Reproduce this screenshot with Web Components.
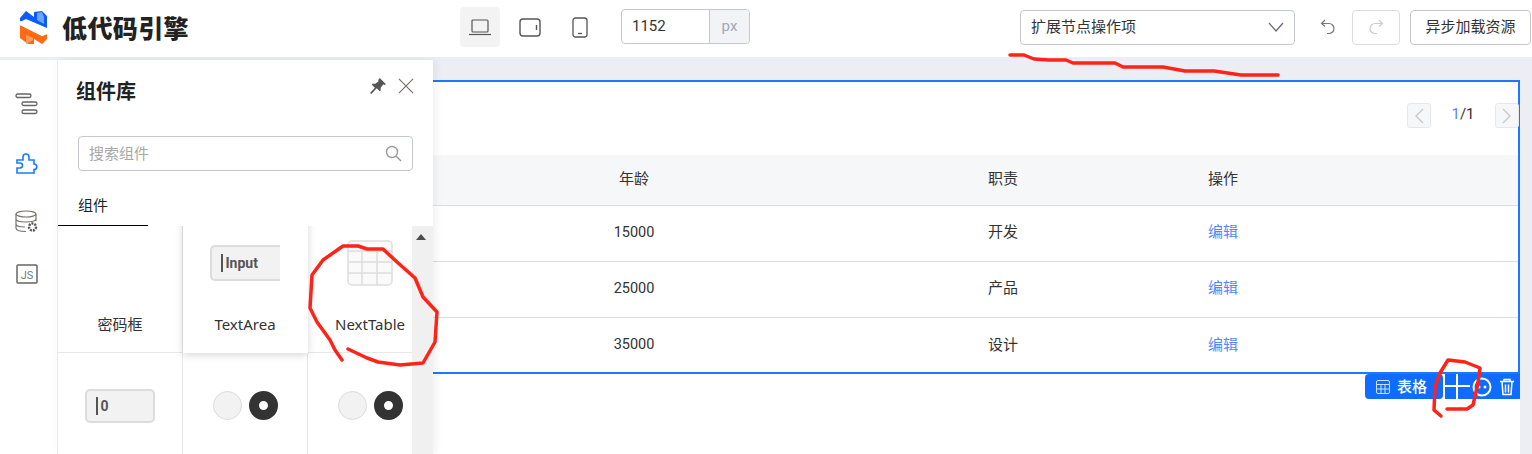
<!DOCTYPE html>
<html lang="zh-CN">
<head>
<meta charset="UTF-8">
<title>低代码引擎</title>
<style>
  html, body { margin: 0; height: 454px; overflow: hidden; background: #edeef3; }
  body { font: 15px Roboto, "Noto Sans CJK SC", sans-serif; color: #333; }
</style>
</head>
<body>
<engine-app></engine-app>

<template id="t-engine-app">
  <style>
    :host { display: flex; flex-direction: column; height: 454px; position: relative; }
    .work { flex: 1; display: flex; min-height: 0; }
  </style>
  <top-bar></top-bar>
  <div class="work">
    <side-rail></side-rail>
    <component-panel></component-panel>
    <design-canvas></design-canvas>
  </div>
  <ink-notes></ink-notes>
</template>

<template id="t-top-bar">
  <style>
    :host { display: flex; align-items: center; height: 57px; box-sizing: border-box; padding-bottom: 3px; background: #fff; flex: none; position: relative; z-index: 3; }
    .logo { display: flex; align-items: center; width: 460px; padding-left: 20px; box-sizing: border-box; flex: none; }
    .logo svg { width: 27px; height: 33px; flex: none; }
    .logo b { margin-left: 15px; font: 900 25px/1 "Noto Sans CJK SC", sans-serif; letter-spacing: .4px; color: #222; white-space: nowrap; }
    .devices { display: flex; width: 161px; flex: none; }
    .dev { width: 40px; height: 40px; margin-right: 10px; border-radius: 4px; display: flex; align-items: center; justify-content: center; }
    .dev.on { background: #f3f3f3; }
    .width { display: flex; width: 129px; height: 35px; margin-top: -2px; box-sizing: border-box; border: 1px solid #c4c6d0; border-radius: 4px; flex: none; overflow: hidden; }
    .width span { flex: 1; padding-left: 10px; line-height: 33px; font-size: 15px; }
    .width i { width: 39px; border-left: 1px solid #c4c6d0; background: #f2f3f7; color: #a3a6b4; font: 15px/33px Roboto, sans-serif; text-align: center; }
    .select { margin-left: 270px; width: 275px; height: 35px; box-sizing: border-box; border: 1px solid #c4c6d0; border-radius: 4px; display: flex; align-items: center; justify-content: space-between; padding: 0 10px; flex: none; }
    .select span, .async { line-height: 20px; padding-bottom: 1px; }
    .undo { width: 57px; box-sizing: border-box; padding-left: 9px; display: flex; justify-content: center; flex: none; }
    .btn { height: 35px; box-sizing: border-box; border: 1px solid #c4c6d0; border-radius: 4px; display: flex; align-items: center; justify-content: center; flex: none; }
    .redo { width: 48px; border-color: #dcdde3; margin-right: 10px; }
    .async { width: 121px; }
  </style>
  <div class="logo">
    <svg viewBox="0 0 27 33">
      <path fill="#0b5cff" d="M0 7 6 0l8 6V1l8-1 5 5v16L0 10z"/>
      <path fill="#6ea4ff" d="M17 2l5-1 2 5v7l-7-4z"/>
      <path fill="#ff6a13" d="M0 14l22 11 5-2v5l-5 5-8-5v5H8l-8-6z"/>
      <path fill="#ff9a5c" d="M6 33V24l7 3v2z"/>
      <path fill="#fff" d="M0 11l6-3 21 9v6l-5 2L0 14z"/>
    </svg>
    <b>低代码引擎</b>
  </div>
  <div class="devices">
    <div class="dev on"><svg width="22" height="17" viewBox="0 0 22 17" fill="none" stroke="#555" stroke-width="1.2"><rect x="3" y="1" width="16" height="12" rx="1"/><path d="M0 15.5h22"/></svg></div>
    <div class="dev"><svg width="22" height="19" viewBox="0 0 22 19" fill="none" stroke="#555" stroke-width="1.4"><rect x="1" y="1" width="20" height="17" rx="3"/><path d="M17.5 7v5"/></svg></div>
    <div class="dev"><svg width="16" height="21" viewBox="0 0 16 21" fill="none" stroke="#555" stroke-width="1.3"><rect x="1" y="1" width="14" height="19" rx="2.5"/><path d="M6 16.5h4"/></svg></div>
  </div>
  <div class="width"><span>1152</span><i>px</i></div>
  <div class="select">
    <span>扩展节点操作项</span>
    <svg width="16" height="10" viewBox="0 0 16 10" fill="none" stroke="#666" stroke-width="1.2"><path d="M1 1l7 8 7-8"/></svg>
  </div>
  <div class="undo"><svg width="16" height="16" viewBox="0 0 16 16" fill="none" stroke="#777" stroke-width="1.2"><path d="M5 1 1.500 4.500 5 7.500M2 4.500h7a5 5 0 0 1 0 10H7"/></svg></div>
  <div class="btn redo"><svg width="16" height="16" viewBox="0 0 16 16" fill="none" stroke="#ccc" stroke-width="1.2"><path d="M11 1l3.500 3.500L11 7.500M14 4.500H7a5 5 0 0 0 0 10h2"/></svg></div>
  <div class="btn async">异步加载资源</div>
</template>

<template id="t-side-rail">
  <style>
    :host { display: flex; flex-direction: column; align-items: center; width: 58px; margin-top: 3px; background: #fff; box-sizing: border-box; flex: none; position: relative; z-index: 2; border-right: 1px solid #eee; }
    svg { display: block; margin-left: -3px; }
    .a { margin-top: 33px; } .b { margin-top: 38px; } .c { margin-top: 36px; } .d { margin-top: 30px; }
  </style>
  <svg class="a" width="24" height="22" viewBox="0 0 24 22" fill="none" stroke="#666" stroke-width="1.3"><rect x="1" y="1" width="15" height="3.500" rx="1.700"/><rect x="7" y="9" width="15" height="3.500" rx="1.700"/><rect x="7" y="17" width="15" height="3.500" rx="1.700"/></svg>
  <svg class="b" width="23" height="21" viewBox="0 0 23 21" fill="none" stroke="#197aff" stroke-width="1.600"><path d="M1 7h6V4a3 3 0 0 1 6 0v3h5v4a2.800 2.800 0 0 1 0 5.600V20H1v-5h3a2.500 2.500 0 0 0 0-5H1z"/></svg>
  <svg class="c" width="24" height="24" viewBox="0 0 24 24" fill="none" stroke="#77706a" stroke-width="1.200"><ellipse cx="11" cy="4" rx="10" ry="3"/><path d="M1 4v14c0 2 4 3.500 10 3.500M21 4v7M1 9c0 2 5 3 10 3s10-1 10-3M1 14c0 2 4 3 9 3"/><circle cx="17.500" cy="17" r="3.500" stroke="#555" stroke-dasharray="2 1" stroke-width="2.400"/></svg>
  <svg class="d" width="22" height="20" viewBox="0 0 22 20"><rect x="1" y="1" width="20" height="18" rx="1" fill="none" stroke="#666" stroke-width="1.500"/><text x="11" y="14.500" text-anchor="middle" font-family="Roboto, sans-serif" font-size="11" fill="#777">JS</text></svg>
</template>

<template id="t-component-panel">
  <style>
    :host { display: flex; flex-direction: column; width: 375px; margin-top: 3px; background: #fff; flex: none; position: relative; z-index: 2; box-shadow: 2px 0 8px rgba(0,0,0,.07); }
    .head { display: flex; align-items: center; height: 63px; padding: 0 19px 0 18px; flex: none; }
    .head b { flex: 1; font-size: 20px; line-height: 24px; font-weight: 700; color: #222; }
    .head svg { display: block; margin-top: -12px; }
    .search { margin: 13px 20px 0; height: 35px; box-sizing: border-box; border: 1px solid #c4c6d0; border-radius: 4px; display: flex; align-items: center; justify-content: space-between; padding: 0 10px; color: #a8a8a8; flex: none; }
    .search span { line-height: 20px; }
    .tabs { height: 55px; box-sizing: border-box; flex: none; position: relative; }
    .tab { display: block; width: 90px; height: 55px; box-sizing: border-box; border-bottom: 1px solid #000; padding: 25px 0 0 20px; line-height: 20px; color: #222; }
    .list { flex: 1; min-height: 0; overflow: hidden; position: relative; }
    .grid { display: grid; grid-template-columns: repeat(3, 125px); margin-top: -16px; }
    .bar { position: absolute; top: 0; right: 0; bottom: 0; width: 21px; background: #f0f0f0; z-index: 2; }
    .bar::before { content: ""; position: absolute; left: 4px; top: 8px; border: 5px solid transparent; border-top: 0; border-bottom: 6px solid #4d4d4d; }
  </style>
  <div class="head">
    <b>组件库</b>
    <svg width="16" height="16" viewBox="0 0 18 18" style="margin-right:12px"><path fill="#555" d="M11 0l7 7-2 1-1-1-3 4 0 3-1 1-3.500-3.500L1.500 18 0 17l5.500-6L2 7.500l1-1h3l4-3-1-1z"/></svg>
    <svg width="16" height="16" viewBox="0 0 17 17" fill="none" stroke="#7b6f62" stroke-width="1.200"><path d="M1 1l15 15M16 1 1 16"/></svg>
  </div>
  <div class="search">
    <span>搜索组件</span>
    <svg width="17" height="17" viewBox="0 0 17 17" fill="none" stroke="#999" stroke-width="1.400"><circle cx="7" cy="7" r="5.500"/><path d="M11 11l5 5"/></svg>
  </div>
  <div class="tabs"><span class="tab">组件</span></div>
  <div class="list">
    <div class="grid">
      <comp-cell>密码框</comp-cell>
      <comp-cell raised><comp-pic slot="pic" kind="input" clip></comp-pic>TextArea</comp-cell>
      <comp-cell>
        <svg slot="pic" width="46" height="46" viewBox="0 0 46 46" fill="none" stroke="#ddd" stroke-width="1.500"><rect x="1" y="1" width="44" height="44" rx="4" fill="#fafafa"/><path d="M1 11h44M1 22h44M1 33h44M15 11v34M30 11v34"/></svg>
        NextTable
      </comp-cell>
      <comp-cell><comp-pic slot="pic" kind="number"></comp-pic></comp-cell>
      <comp-cell><comp-pic slot="pic" kind="radio"></comp-pic></comp-cell>
      <comp-cell><comp-pic slot="pic" kind="radio"></comp-pic></comp-cell>
    </div>
    <div class="bar"></div>
  </div>
</template>

<template id="t-comp-cell">
  <style>
    :host { display: flex; flex-direction: column; align-items: center; height: 143px; box-sizing: border-box; border-right: 1px solid #e8e8e8; border-bottom: 1px solid #e8e8e8; background: #fff; position: relative; }
    :host([raised]) { box-shadow: 0 2px 8px rgba(0,0,0,.16); z-index: 1; border-color: transparent; }
    .pic { height: 105px; display: flex; align-items: center; justify-content: center; flex: none; }
    .label { font: 15px/18px "Noto Sans", "Noto Sans CJK SC", sans-serif; color: #333; }
  </style>
  <div class="pic"><slot name="pic"></slot></div>
  <div class="label"><slot></slot></div>
</template>

<template id="t-comp-pic">
  <style>
    :host { display: block; }
    .field { width: 70px; height: 34px; box-sizing: border-box; background: #f2f2f2; border: 2px solid #dcdcdc; border-radius: 5px; display: flex; align-items: center; padding-left: 9px; padding-top: 1px; font: 700 14px/1 Roboto, sans-serif; color: #555; }
    :host([clip]) .field { border-right: 0; border-radius: 5px 0 0 5px; height: 36px; }
    .field::before { content: ""; width: 1.500px; height: 18px; background: #555; margin-right: 3px; }
    .radios { display: flex; gap: 7px; }
    .off, .on { width: 29px; height: 29px; box-sizing: border-box; border-radius: 50%; }
    .off { background: #f2f2f2; border: 1.500px solid #dcdcdc; }
    .on { background: #fff; border: 10px solid #333; }
  </style>
  <div id="root"></div>
</template>

<template id="t-design-canvas">
  <style>
    :host { display: block; flex: 1; min-width: 0; padding: 23px 12px 0 0; background: #edeef3; }
    .sheet { background: #fff; height: 100%; }
    .box { height: 294px; box-sizing: border-box; border: 2px solid #197aff; border-left: 0; position: relative; }
  </style>
  <div class="sheet">
    <div class="box">
      <data-table></data-table>
      <node-toolbar></node-toolbar>
    </div>
  </div>
</template>

<template id="t-data-table">
  <style>
    :host { display: block; }
    .pager { height: 73px; display: flex; align-items: center; justify-content: flex-end; box-sizing: border-box; padding-bottom: 6px; margin-right: -1px; }
    .pg { width: 24px; height: 25px; box-sizing: border-box; border: 1px solid #e6e7eb; background: #f6f7f9; border-radius: 3px; display: flex; align-items: center; justify-content: center; }
    .num { width: 64px; text-align: center; font-size: 15px; line-height: 20px; padding-bottom: 4px; }
    .num em { font-style: normal; color: #5584ff; }
    .row { display: grid; grid-template-columns: 402px 153px 220px 1fr; height: 56px; box-sizing: border-box; padding-bottom: 3px; align-items: center; border-bottom: 1px solid #dcdcdc; }
    .row > * { display: block; line-height: 20px; }
    .row.head { height: 51px; padding-bottom: 2px; background: #f6f7f9; border-bottom-color: #dcdce4; }
    .row:last-child { border-bottom: 0; height: 55px; padding-bottom: 2px; }
    .row > :first-child { text-align: center; }
    .row > :nth-child(2) { grid-column: 3; }
    .row:not(.head) > :first-child { font-size: 14.500px; margin-top: 1px; }
    a { color: #5584ff; text-decoration: none; }
  </style>
  <div class="pager">
    <span class="pg"><svg width="10" height="16" viewBox="0 0 10 16" fill="none" stroke="#c8c8c8" stroke-width="1.400"><path d="M9 1 2 8l7 7"/></svg></span>
    <span class="num"><em>1</em>/1</span>
    <span class="pg"><svg width="10" height="16" viewBox="0 0 10 16" fill="none" stroke="#c8c8c8" stroke-width="1.400"><path d="M1 1l7 7-7 7"/></svg></span>
  </div>
  <div class="row head"><span>年龄</span><span>职责</span><span>操作</span></div>
  <div class="row"><span>15000</span><span>开发</span><a>编辑</a></div>
  <div class="row"><span>25000</span><span>产品</span><a>编辑</a></div>
  <div class="row"><span>35000</span><span>设计</span><a>编辑</a></div>
</template>

<template id="t-node-toolbar">
  <style>
    :host { position: absolute; right: -2px; top: calc(100% + 2px); display: flex; height: 25px; color: #fff; }
    .name { width: 78px; background: #0f6cff; border-radius: 4px; display: flex; align-items: center; padding-left: 11px; box-sizing: border-box; gap: 7px; font-size: 15px; font-weight: 500; }
    .name span { line-height: 20px; }
    .tools { width: 75px; margin-left: 2px; background: #0f6cff; display: flex; align-items: center; position: relative; }
    .plus { width: 25px; height: 25px; position: relative; flex: none; }
    .plus::before { content: ""; position: absolute; left: 0; right: 0; top: 11px; height: 2px; background: #fff; }
    .plus::after { content: ""; position: absolute; top: 0; bottom: 0; left: 11px; width: 2px; background: #fff; }
    svg { display: block; flex: none; }
  </style>
  <div class="name">
    <svg width="14" height="14" viewBox="0 0 14 14" fill="none" stroke="#cfe0ff" stroke-width="1"><rect x=".5" y=".5" width="13" height="13" rx="1.500"/><path d="M.5 4.500h13M.5 9h13M5 4.500v9M9 4.500v9"/></svg>
    <span>表格</span>
  </div>
  <div class="tools">
    <div class="plus"></div>
    <svg width="20" height="20" viewBox="0 0 20 20" style="margin-left:2px" fill="none" stroke="#fff" stroke-width="2"><circle cx="10" cy="10" r="8.500"/><circle cx="7" cy="10" r="1.500" fill="#fff" stroke="none"/><circle cx="13" cy="10" r="1.500" fill="#fff" stroke="none"/></svg>
    <svg width="16" height="18" viewBox="0 0 16 18" style="margin-left:7px" fill="none" stroke="#fff" stroke-width="1.500"><path d="M1 3.500h14M5 3.500V1.500h6v2M3 3.500l1 13h8l1-13M6.500 6.500v8M9.500 6.500v8"/></svg>
  </div>
</template>

<template id="t-ink-notes">
  <style>
    :host { position: absolute; inset: 0; pointer-events: none; z-index: 5; }
    svg { display: block; }
    path { fill: none; stroke: #ff2318; stroke-width: 3.500; stroke-linecap: round; stroke-linejoin: round; }
  </style>
  <svg width="1532" height="454" viewBox="0 0 1532 454">
    <path d="M1010 55 1024 55 1034 59 1049 60 1066 60 1073 63 1090 63 1115 63 1123 67 1163 67 1185 71 1214 71 1241 75 1278 75"/>
    <path d="M342 360 335 350 330 340 317 322 310 308 312 275 323 260 343 246 358 246 367 249 383 249 397 262 415 278 423 297 437 312 435 342 423 363 400 365 378 362 367 358 348 349"/>
    <path d="M1441 416 1434 410 1435 387 1440 373 1448 360 1465 362 1480 368 1478 383 1473 405 1467 409 1447 409"/>
  </svg>
</template>

<script>
  // every element clones its template of the same name into an open shadow root
  function shadowFrom(el, name) {
    el.attachShadow({ mode: 'open' }).appendChild(document.getElementById('t-' + name).content.cloneNode(true));
  }
  ['engine-app', 'top-bar', 'side-rail', 'component-panel', 'comp-cell', 'design-canvas', 'data-table', 'node-toolbar', 'ink-notes'].forEach(name => {
    customElements.define(name, class extends HTMLElement {
      constructor() {
        super();
        shadowFrom(this, name);
      }
    });
  });

  class CompPic extends HTMLElement {
    constructor() {
      super();
      shadowFrom(this, 'comp-pic');
    }
    connectedCallback() {
      const root = this.shadowRoot.getElementById('root');
      const kind = this.getAttribute('kind');
      if (kind === 'radio') root.innerHTML = '<div class="radios"><div class="off"></div><div class="on"></div></div>';
      else root.innerHTML = '<div class="field">' + (kind === 'input' ? 'Input' : '0') + '</div>';
    }
  }
  customElements.define('comp-pic', CompPic);
</script>
</body>
</html>
